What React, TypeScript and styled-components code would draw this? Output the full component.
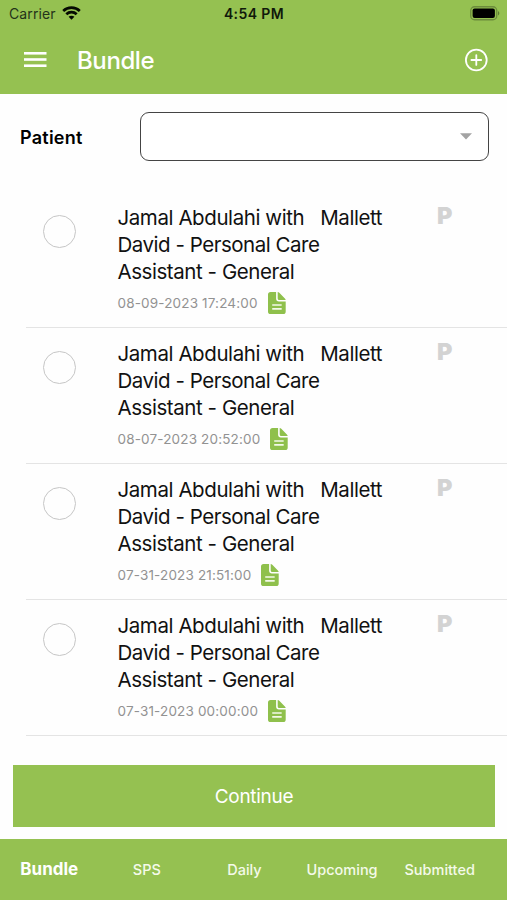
import React from 'react';
import styled, { createGlobalStyle } from 'styled-components';

const GREEN = '#95c151';

const GlobalStyle = createGlobalStyle`
  * { box-sizing: border-box; }
  body {
    margin: 0;
    background: #fefefe;
    font-family: Inter, "Liberation Sans", sans-serif;
    color: #111;
  }
  button { font-family: inherit; border: 0; padding: 0; background: none; }
`;

const Screen = styled.div`
  width: 507px;
  height: 900px;
  display: flex;
  flex-direction: column;
  overflow: hidden;
`;

const StatusBar = styled.div`
  height: 27px;
  flex: none;
  display: grid;
  grid-template-columns: 1fr auto 1fr;
  align-items: center;
  padding: 0 7px 0 9px;
  background: ${GREEN};
  color: #10190a;
`;

const Carrier = styled.div`
  display: flex;
  align-items: center;
  gap: 6px;
  font-size: 14px;
  line-height: 20px;
  color: #24331a;
  letter-spacing: 0.1px;
`;

const Clock = styled.div`
  margin-right: 1px;
  font-size: 14px;
  font-weight: 600;
  line-height: 20px;
  letter-spacing: 0.4px;
`;

const BatterySlot = styled.div`
  display: flex;
  justify-content: flex-end;
`;

const Header = styled.header`
  height: 67px;
  flex: none;
  display: flex;
  align-items: center;
  padding: 0 19px 2px 24px;
  background: ${GREEN};
  color: #fff;
`;

const IconButton = styled.button`
  display: flex;
  color: inherit;
`;

const Title = styled.h1`
  flex: 1;
  margin: 2px 0 0 30px;
  font-size: 24px;
  line-height: 30px;
  font-weight: 500;
  letter-spacing: -0.4px;
`;

const Filter = styled.div`
  height: 98px;
  flex: none;
  display: flex;
  align-items: flex-start;
  padding: 18px 18px 0 20px;
`;

const FilterLabel = styled.label`
  width: 120px;
  font-size: 18px;
  line-height: 52px;
  font-weight: 600;
  letter-spacing: 0.25px;
  color: #000;
`;

const Select = styled.div`
  width: 349px;
  height: 49px;
  display: flex;
  align-items: center;
  justify-content: flex-end;
  padding-right: 16px;
  border: 1.5px solid #444;
  border-radius: 9px;
  background: #fff;
`;

const List = styled.ul`
  flex: none;
  margin: 0 0 0 26px;
  padding: 0;
  list-style: none;
`;

const Row = styled.li`
  height: 136px;
  display: flex;
  align-items: flex-start;
  padding: 12px 54px 0 17px;
  border-bottom: 1px solid #e4e4e4;
`;

const Radio = styled.span`
  width: 33px;
  height: 33px;
  flex: none;
  margin-top: 11px;
  border: 1.5px solid #c6c6c6;
  border-radius: 50%;
`;

const RowBody = styled.div`
  flex: 1;
  margin-left: 41.5px;
`;

const RowTitle = styled.div`
  font-size: 20.5px;
  line-height: 27px;
  white-space: pre;
`;

const Line = styled.span<{ $spacing: number }>`
  display: block;
  letter-spacing: ${(p) => p.$spacing}px;
`;

const RowMeta = styled.div`
  height: 24px;
  margin-top: 6px;
  display: flex;
  align-items: center;
  gap: 10px;
  font-size: 13.5px;
  letter-spacing: 0.16px;
  color: #929292;
`;

const Flag = styled.span`
  width: 16px;
  font-size: 23.5px;
  line-height: 24px;
  font-weight: 900;
  color: #d3d3d3;
`;

const Continue = styled.button`
  height: 62px;
  flex: none;
  margin: 29px 12px 0 13px;
  background: ${GREEN};
  color: #fff;
  font-size: 19px;
  font-weight: 400;
  letter-spacing: -0.3px;
`;

const TabBar = styled.nav`
  height: 61px;
  flex: none;
  margin-top: 12px;
  padding-left: 0.5px;
  display: flex;
  background: ${GREEN};
`;

const Tab = styled.div<{ $active: boolean }>`
  width: 97.6px;
  flex: none;
  line-height: ${(p) => (p.$active ? 61 : 62)}px;
  text-align: center;
  white-space: nowrap;
  color: ${(p) => (p.$active ? '#fff' : '#f4fae9')};
  font-size: ${(p) => (p.$active ? 17 : 14.5)}px;
  font-weight: ${(p) => (p.$active ? 700 : 500)};
`;

const WifiIcon = () => (
  <svg width="19" height="15" viewBox="0 0 19 15" fill="none" stroke="#050a02" strokeWidth="2.7">
    <path d="M1.2 4.9C5.8.5 13.2.5 17.8 4.9" />
    <path d="M4.3 8.2c2.9-2.8 7.5-2.8 10.4 0" />
    <path d="M9.5 13.8 6.6 10.8c1.6-1.5 4.2-1.5 5.8 0z" fill="#050a02" stroke="none" />
  </svg>
);

const BatteryIcon = () => (
  <svg width="30" height="15" viewBox="0 0 30 15">
    <rect x="0.75" y="0.75" width="26" height="13" rx="3.8" fill="none" stroke="#6c8c3c" strokeWidth="1.3" />
    <rect x="2.6" y="2.6" width="22.3" height="9.3" rx="2" fill="#000" />
    <path d="M28 5c1.8.8 1.8 3.7 0 4.5z" fill="#5f7c35" />
  </svg>
);

const MenuIcon = () => (
  <svg width="23" height="17" viewBox="0 0 23 17" fill="#fff">
    <rect y="1" width="22.5" height="2.6" />
    <rect y="7.2" width="22.5" height="2.6" />
    <rect y="13.4" width="22.5" height="2.6" />
  </svg>
);

const AddIcon = () => (
  <svg width="24" height="24" viewBox="0 0 24 24" fill="none" stroke="#fff" strokeWidth="1.8">
    <circle cx="12.3" cy="12" r="10.4" />
    <path d="M12.3 7.1v9.8M7.4 12h9.8" strokeLinecap="round" />
  </svg>
);

const CaretIcon = () => (
  <svg width="12" height="7" viewBox="0 0 12 7">
    <path d="M0 .3h12L6 6.5z" fill="#a3a3a3" />
  </svg>
);

const DocumentIcon = () => (
  <svg width="18" height="22" viewBox="0 0 18 22">
    <path
      d="M2.6 0H8.1V6.6Q8.1 9.5 11 9.5H17.7V19.4Q17.7 22 15.1 22H2.6Q0 22 0 19.4V2.6Q0 0 2.6 0Z"
      fill="#8fc04c"
    />
    <path d="M9.7 0Q10.6.1 11.3.8L16.9 6.4Q17.6 7.1 17.7 8H11.2Q9.7 8 9.7 6.5Z" fill="#8fc04c" />
    <path d="M4.8 13h8.3M4.8 16.9h8.3" stroke="#f3f9e8" strokeWidth="1.6" strokeLinecap="round" />
  </svg>
);

const visits = ['08-09-2023 17:24:00', '08-07-2023 20:52:00', '07-31-2023 21:51:00', '07-31-2023 00:00:00'];
const tabs = ['Bundle', 'SPS', 'Daily', 'Upcoming', 'Submitted'];

export default function App() {
  return (
    <>
      <GlobalStyle />
      <Screen>
        <StatusBar>
          <Carrier>
            <span>Carrier</span>
            <WifiIcon />
          </Carrier>
          <Clock>4:54 PM</Clock>
          <BatterySlot>
            <BatteryIcon />
          </BatterySlot>
        </StatusBar>
        <Header>
          <IconButton aria-label="Menu">
            <MenuIcon />
          </IconButton>
          <Title>Bundle</Title>
          <IconButton aria-label="Add">
            <AddIcon />
          </IconButton>
        </Header>
        <Filter>
          <FilterLabel>Patient</FilterLabel>
          <Select role="combobox" aria-label="Patient">
            <CaretIcon />
          </Select>
        </Filter>
        <List>
          {visits.map((date) => (
            <Row key={date}>
              <Radio role="radio" aria-checked={false} />
              <RowBody>
                <RowTitle>
                  <Line $spacing={-0.42}>{'Jamal Abdulahi with   Mallett'}</Line>
                  <Line $spacing={-0.48}>David - Personal Care</Line>
                  <Line $spacing={-0.44}>Assistant - General</Line>
                </RowTitle>
                <RowMeta>
                  <span>{date}</span>
                  <DocumentIcon />
                </RowMeta>
              </RowBody>
              <Flag>P</Flag>
            </Row>
          ))}
        </List>
        <Continue>Continue</Continue>
        <TabBar>
          {tabs.map((name, i) => (
            <Tab key={name} $active={i === 0}>
              {name}
            </Tab>
          ))}
        </TabBar>
      </Screen>
    </>
  );
}
